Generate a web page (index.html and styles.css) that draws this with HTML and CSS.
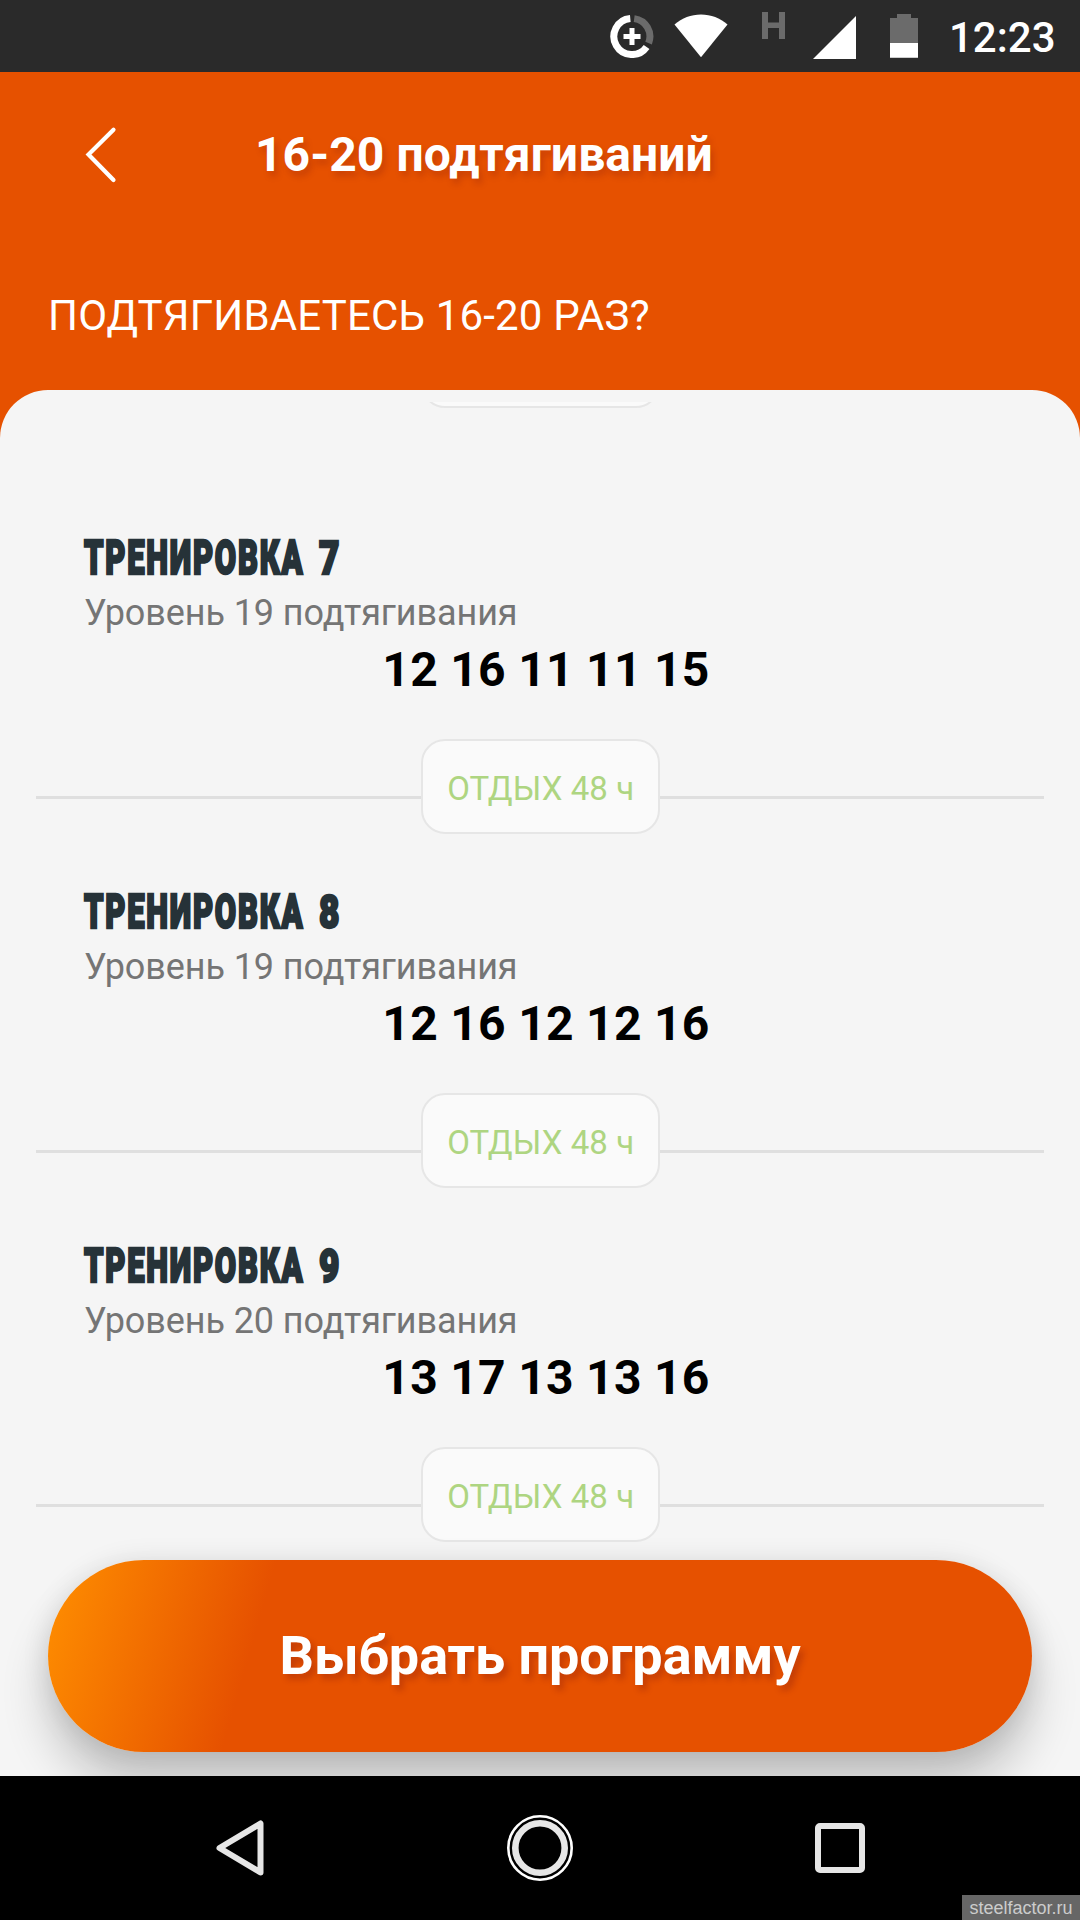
FILE: index.html
```html
<!DOCTYPE html>
<html lang="ru">
<head>
<meta charset="utf-8">
<title>16-20 подтягиваний</title>
<link rel="stylesheet" href="styles.css">
</head>
<body>
<div class="screen">
  <div class="status">
    <svg class="ic-saver" width="44" height="44" viewBox="0 0 44 44" fill="none">
      <path d="M20.3 4.6A18 18 0 1 0 36.6 32.9" stroke="#fff" stroke-width="7"/>
      <path d="M24.2 4.600A18 18 0 0 1 38.600 29.100" stroke="#6b6b6b" stroke-width="7"/>
      <path d="M22 14v17M13.500 22.500h17" stroke="#fff" stroke-width="5"/>
    </svg>
    <svg class="ic-wifi" width="54" height="44" viewBox="0 0 54 44"><path d="M27 43.2.5 10.5C8 4 17 .4 27 .4S46 4 53.500 10.500z" fill="#fff"/></svg>
    <svg class="ic-h" width="23" height="27" viewBox="0 0 23 27"><path d="M0 0h6v10.500h11V0h6v27h-6V16H6v11H0z" fill="#6b6b6b"/></svg>
    <svg class="ic-signal" width="43" height="43" viewBox="0 0 43 43"><path d="M43 0v43H0z" fill="#fff"/></svg>
    <svg class="ic-battery" width="28" height="44" viewBox="0 0 28 44"><path d="M7 0h14v4h7v39.700H0V4h7z" fill="#6b6b6b"/><path d="M0 29h28v14.700H0z" fill="#fff"/></svg>
    <span class="clock">12:23</span>
  </div>

  <header class="header">
    <div class="bar">
      <svg class="back" width="34" height="60" viewBox="0 0 34 60"><path d="M29.500 4.800 4.500 29.500 29.500 55" fill="none" stroke="#fff" stroke-width="4.200" stroke-linecap="round" stroke-linejoin="miter"/></svg>
      <h1 class="title">16-20 подтягиваний</h1>
    </div>
    <p class="question">ПОДТЯГИВАЕТЕСЬ 16-20 РАЗ?</p>
  </header>

  <main class="sheet">
    <div class="list">
      <div class="rest-tail"><div class="rest"></div></div>
      <section class="workout">
        <h2 class="name"><span class="word">ТРЕНИРОВКА</span><span class="num">7</span></h2>
        <p class="level">Уровень 19 подтягивания</p>
        <p class="sets">12 16 11 11 15</p>
        <div class="divider"><div class="rest">ОТДЫХ 48 ч</div></div>
      </section>
      <section class="workout">
        <h2 class="name"><span class="word">ТРЕНИРОВКА</span><span class="num">8</span></h2>
        <p class="level">Уровень 19 подтягивания</p>
        <p class="sets">12 16 12 12 16</p>
        <div class="divider"><div class="rest">ОТДЫХ 48 ч</div></div>
      </section>
      <section class="workout">
        <h2 class="name"><span class="word">ТРЕНИРОВКА</span><span class="num">9</span></h2>
        <p class="level">Уровень 20 подтягивания</p>
        <p class="sets">13 17 13 13 16</p>
        <div class="divider"><div class="rest">ОТДЫХ 48 ч</div></div>
      </section>
    </div>
    <button class="choose"><span class="choose-label">Выбрать программу</span></button>
  </main>

  <nav class="nav">
    <svg width="70" height="70" viewBox="0 0 70 70"><path d="M14.500 35 55.500 10.500v49z" fill="none" stroke="#e6e6e6" stroke-width="6" stroke-linejoin="round"/></svg>
    <svg width="70" height="70" viewBox="0 0 70 70" fill="none"><circle cx="35" cy="35" r="31.700" stroke="#fff" stroke-width="2.600"/><circle cx="35" cy="35" r="24.700" stroke="#e6e6e6" stroke-width="6.600"/></svg>
    <svg width="70" height="70" viewBox="0 0 70 70"><rect x="13" y="13" width="44" height="44" rx="2" fill="none" stroke="#e6e6e6" stroke-width="6"/></svg>
    <span class="watermark">steelfactor.ru</span>
  </nav>
</div>
</body>
</html>
```
FILE: styles.css
```css
* { box-sizing: border-box; margin: 0; padding: 0; }
body { font-family: Roboto, "Noto Sans", sans-serif; background: #e65100; }
.screen { width: 1080px; height: 1920px; display: flex; flex-direction: column; overflow: hidden; }
svg { display: block; flex: none; }

.status { height: 72px; flex: none; background: #2a2a2a; display: flex; align-items: flex-start; padding-left: 610px; color: #fff; }
.ic-saver { margin-top: 14px; }
.ic-wifi { margin: 14px 0 0 20px; }
.ic-h { margin: 12px 0 0 34px; }
.ic-signal { margin: 16px 0 0 28px; }
.ic-battery { margin: 14px 0 0 34px; }
.clock { margin: 13px 0 0 31px; font-size: 42px; line-height: 50px; font-weight: 500; }

.header { height: 318px; flex: none; background: #e65100; color: #fff; }
.bar { height: 166px; display: flex; align-items: center; padding-left: 84px; }
.back { margin-right: 137px; }
.title { font-size: 48px; line-height: 56px; font-weight: 700; letter-spacing: .08px; text-shadow: 3px 5px 6px rgba(120, 20, 20, .25); white-space: nowrap; }
.question { padding: 53px 0 0 48px; font-size: 42px; line-height: 50px; letter-spacing: .17px; white-space: nowrap; }

.sheet { height: 1386px; flex: none; background: #f5f5f5; border-radius: 48px 48px 0 0; padding-top: 12px; overflow: hidden; }
.list { height: 1158px; }
.rest-tail { height: 6px; overflow: hidden; display: flex; align-items: flex-end; justify-content: center; }
.workout { height: 354px; }
.rest-tail + .workout { margin-top: 72px; }
.name { height: 103px; padding: 53px 0 0 84px; display: flex; font-size: 48px; line-height: 50px; font-weight: 900; color: #263238; -webkit-text-stroke: 2.5px #263238; }
.word, .num { display: block; transform-origin: 0 50%; white-space: nowrap; }
.word { width: 235px; letter-spacing: 2.7px; transform: scaleX(.645); }
.num { font-size: 47px; transform: scaleX(.75); }
.level { padding: 9px 0 0 84px; font-size: 36px; line-height: 42px; letter-spacing: -.1px; color: #757575; }
.sets { padding: 8px 0 0 12px; font-size: 48px; line-height: 56px; font-weight: 700; letter-spacing: .3px; color: #000; text-align: center; }
.divider { margin: 41px 36px 0; height: 95px; display: flex; justify-content: center; background: linear-gradient(#dfdfdf, #dfdfdf) 0 57px / 100% 3px no-repeat; }
.rest { flex: none; width: 239px; height: 95px; border: 2px solid #e6e6e6; border-radius: 24px; background: #fafafa; color: #aed581; font-size: 33px; line-height: 40px; letter-spacing: .1px; padding: 28px 0 0 1.5px; text-align: center; }

.choose { position: relative; display: block; width: 984px; height: 192px; margin: 0 48px; border: 0; border-radius: 96px; background: linear-gradient(106deg, #ff8f00 0%, #e65100 22%); color: #fff; font-family: inherit; font-size: 54px; line-height: 64px; font-weight: 700; letter-spacing: -.06px; box-shadow: 0 36px 48px rgba(0, 0, 0, .2), 0 2px 28px rgba(0, 0, 0, .11); }
.choose-label { text-shadow: 4px 5px 6px rgba(120, 20, 20, .32); }

.nav { position: relative; height: 144px; flex: none; background: #000; display: flex; align-items: center; justify-content: center; gap: 230px; }
.watermark { position: absolute; right: 0; bottom: 0; width: 118px; height: 25px; background: #666; color: #ccc; font: 18px/26px "Liberation Sans", Arial, sans-serif; text-align: center; }
```
